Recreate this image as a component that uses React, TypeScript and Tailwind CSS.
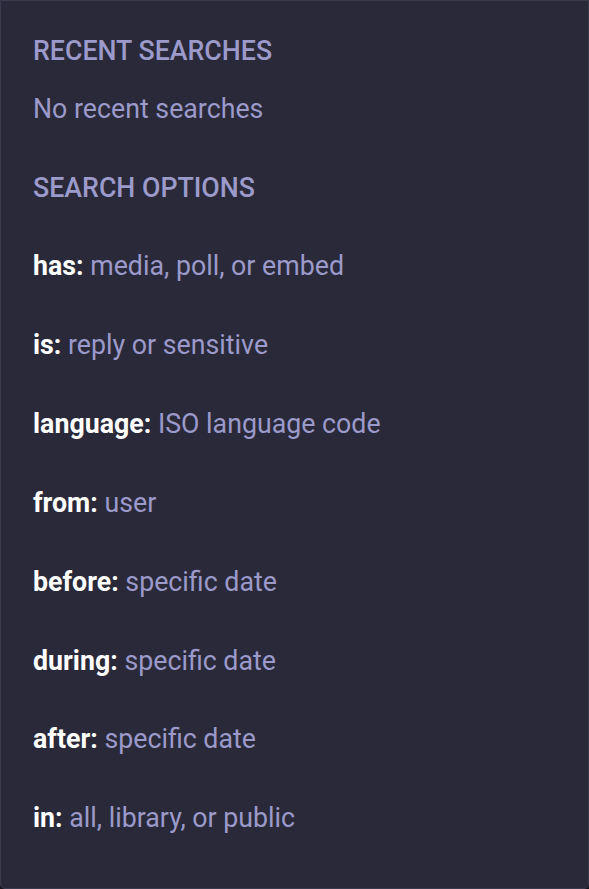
const options: [string, string][] = [
  ["has:", "media, poll, or embed"],
  ["is:", "reply or sensitive"],
  ["language:", "ISO language code"],
  ["from:", "user"],
  ["before:", "specific date"],
  ["during:", "specific date"],
  ["after:", "specific date"],
  ["in:", "all, library, or public"],
];

export default function App() {
  return (
    <div className="h-[889px] w-[589px] bg-[#16151e] font-['Roboto',sans-serif]">
      <div className="box-border h-full rounded-b-[5px] border border-[#3a3a4e] bg-[#2a2939] px-8 pt-[31px] text-[26.75px] text-[#9b9aca]">
        <h4 className="mb-[19px] font-medium uppercase leading-[39px]">Recent searches</h4>
        <div className="leading-[39px]">No recent searches</div>

        <h4 className="mt-10 font-medium uppercase leading-[39px]">Search options</h4>
        <ul className="mt-[19px]">
          {options.map(([key, hint]) => (
            <li key={key} className="py-5 leading-[38.9px]">
              <span className="font-bold text-white">{key}</span> {hint}
            </li>
          ))}
        </ul>
      </div>
    </div>
  );
}
